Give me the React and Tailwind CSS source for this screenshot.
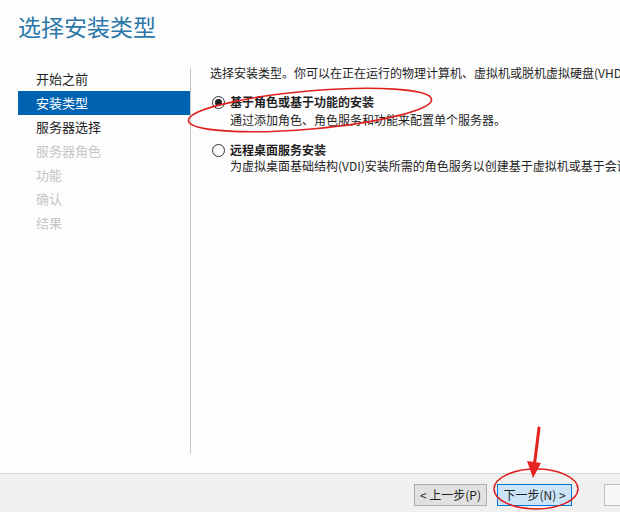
export default function App() {
  const steps = [
    { label: "开始之前", state: "done" },
    { label: "安装类型", state: "active" },
    { label: "服务器选择", state: "done" },
    { label: "服务器角色", state: "disabled" },
    { label: "功能", state: "disabled" },
    { label: "确认", state: "disabled" },
    { label: "结果", state: "disabled" },
  ];

  return (
    <div
      className="relative w-[620px] h-[512px] overflow-hidden bg-[#fdfdfd] flex flex-col text-[#1e1e1e]"
      style={{ fontFamily: '"Noto Sans CJK SC", "Noto Sans", sans-serif' }}
    >
      {/* Title */}
      <div className="h-[64px] pl-[18px] pt-[9px]">
        <h1 className="text-[23px] leading-[34px] text-[#2a77a8] font-normal">选择安装类型</h1>
      </div>

      {/* Body */}
      <div className="flex h-[409px]">
        <div className="w-[190px] pl-[18px] pt-[3px] shrink-0">
          {steps.map((s) => (
            <div
              key={s.label}
              className={
                s.state === "active"
                  ? "h-[24px] pl-[18px] text-[13px] leading-[24px] bg-[#0063b1] text-white"
                  : s.state === "done"
                  ? "h-[24px] pl-[18px] text-[13px] leading-[24px] text-[#1e1e1e]"
                  : "h-[24px] pl-[18px] text-[13px] leading-[24px] text-[#c6c6c6]"
              }
            >
              {s.label}
            </div>
          ))}
        </div>

        <div className="mt-[4px] h-[386px] w-px bg-[#c8c8c8] shrink-0" />

        <div className="flex-1 pl-[19px] pt-[1px] overflow-hidden whitespace-nowrap text-[12px] leading-[16px]">
          <p>选择安装类型。你可以在正在运行的物理计算机、虚拟机或脱机虚拟硬盘(VHD)上安装。</p>

          <div className="mt-[13px] flex items-center gap-[5px]">
            <span className="w-[13px] h-[13px] rounded-full border border-[#333] flex items-center justify-center ml-[2px]">
              <span className="w-[7px] h-[7px] rounded-full bg-[#1e1e1e]" />
            </span>
            <span className="font-bold">基于角色或基于功能的安装</span>
          </div>
          <p className="pl-[20px] mt-[2px]">通过添加角色、角色服务和功能来配置单个服务器。</p>

          <div className="mt-[14px] flex items-center gap-[5px]">
            <span className="w-[13px] h-[13px] rounded-full border border-[#333] ml-[2px]" />
            <span className="font-bold">远程桌面服务安装</span>
          </div>
          <p className="pl-[20px]">为虚拟桌面基础结构(VDI)安装所需的角色服务以创建基于虚拟机或基于会话的桌面部署。</p>
        </div>
      </div>

      {/* Footer */}
      <div className="flex-1 border-t border-[#d9d9d9] bg-[#f0f0f0] flex items-start pt-[10px] pl-[414px] gap-[10px] text-[12px] overflow-hidden">
        <button className="shrink-0 w-[73px] h-[22px] border border-[#adadad] bg-[#e1e1e1] leading-[20px] whitespace-nowrap">
          &lt; 上一步(P)
        </button>
        <button className="shrink-0 w-[75px] h-[22px] border border-[#0078d7] bg-[#cce4f7] leading-[20px] whitespace-nowrap">
          下一步(N) &gt;
        </button>
        <button className="shrink-0 ml-[22px] w-[75px] h-[22px] border border-[#bfbfbf] bg-[#f7f7f7] leading-[20px]" />
      </div>

      {/* Red annotations */}
      <svg className="absolute inset-0 pointer-events-none" width="620" height="512" viewBox="0 0 620 512">
        <ellipse cx="310" cy="110" rx="122" ry="19" transform="rotate(-5 310 110)" fill="none" stroke="#e0201f" strokeWidth="1.6" />
        <ellipse cx="536" cy="489" rx="42" ry="20" fill="none" stroke="#e0201f" strokeWidth="1.6" />
        <line x1="539" y1="428" x2="534" y2="468" stroke="#e8231f" strokeWidth="3" strokeLinecap="round" />
        <path d="M527 461 L533 478 L541 463 Z" fill="#e8231f" />
      </svg>
    </div>
  );
}
